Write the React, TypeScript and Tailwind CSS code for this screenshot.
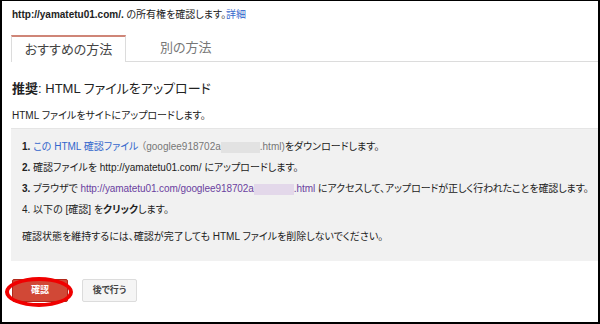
export default function App() {
  return (
    <div className="w-[600px] h-[324px] overflow-hidden bg-white border-black border-l-2 border-r-2 border-t border-b-2 pl-[9px] font-['Liberation_Sans','Noto_Sans_CJK_JP',sans-serif] text-[#222] [font-feature-settings:'palt']">
      <div className="mt-[7px] ml-[1px] text-[10px] leading-[14px]">
        <span className="font-bold">http://yamatetu01.com/.</span> の所有権を確認します。<span className="text-[#3366cc]">詳細</span>
      </div>
      <div className="mt-[13px] flex h-[27px]">
        <div className="w-[115px] border-t-2 border-t-[#cf8577] border-l border-r border-[#dcdcdc] flex items-center justify-center text-[13px] text-[#444]">
          おすすめの方法
        </div>
        <div className="flex-1 border-b border-[#dcdcdc] flex items-center pl-[34px] text-[13px] text-[#777]">
          別の方法
        </div>
      </div>
      <div className="mt-[18px] ml-[1px] text-[13px] leading-[18px] text-[#222]">
        <span className="font-bold">推奨</span>: HTML ファイルをアップロード
      </div>
      <div className="mt-[11px] ml-[1px] text-[10px] leading-[14px]">
        HTML ファイルをサイトにアップロードします。
      </div>
      <div className="mt-[5px] bg-[#f1f1f1] border-t border-[#e5e5e5] pt-[7px] pb-[14px] pl-[11px] text-[10px] leading-[21px] whitespace-nowrap">
        <div>
          <span className="font-bold">1.</span>{" "}
          <span className="text-[#3366cc]">この HTML 確認ファイル</span>{" "}
          <span className="text-[#777]">（googlee918702a</span>
          <span className="inline-block w-[39px] h-[11px] bg-[#e2e2e2] align-middle"></span>
          <span className="text-[#777]">.html)</span>をダウンロードします。
        </div>
        <div>
          <span className="font-bold">2.</span> 確認ファイルを http://yamatetu01.com/ にアップロードします。
        </div>
        <div className="tracking-[-0.08px]">
          <span className="font-bold">3.</span> ブラウザで{" "}
          <span className="text-[#6b3fa0]">http://yamatetu01.com/googlee918702a</span>
          <span className="inline-block w-[40px] h-[11px] bg-[#e3d8ea] align-middle"></span>
          <span className="text-[#6b3fa0]">.html</span> にアクセスして、アップロードが正しく行われたことを確認します。
        </div>
        <div>
          4. 以下の [確認] を<span className="font-bold">クリック</span>します。
        </div>
        <div className="mt-[6px]">
          確認状態を維持するには、確認が完了しても HTML ファイルを削除しないでください。
        </div>
      </div>
      <div className="mt-[18px] ml-[1px] flex gap-[14px]">
        <div className="relative">
          <div className="h-[23px] w-[56px] bg-[#d14836] border border-[#b0281a] rounded-[2px] text-white font-bold text-[9px] flex items-center justify-center">
            確認
          </div>
          <div className="absolute left-[-7px] top-[-2px] w-[68px] h-[30px] rounded-[50%] border-[4px] border-[#f00000]"></div>
        </div>
        <div className="h-[23px] w-[55px] bg-[#f5f5f5] border border-[#dcdcdc] rounded-[2px] text-[#444] font-bold text-[9px] flex items-center justify-center">
          後で行う
        </div>
      </div>
    </div>
  );
}
